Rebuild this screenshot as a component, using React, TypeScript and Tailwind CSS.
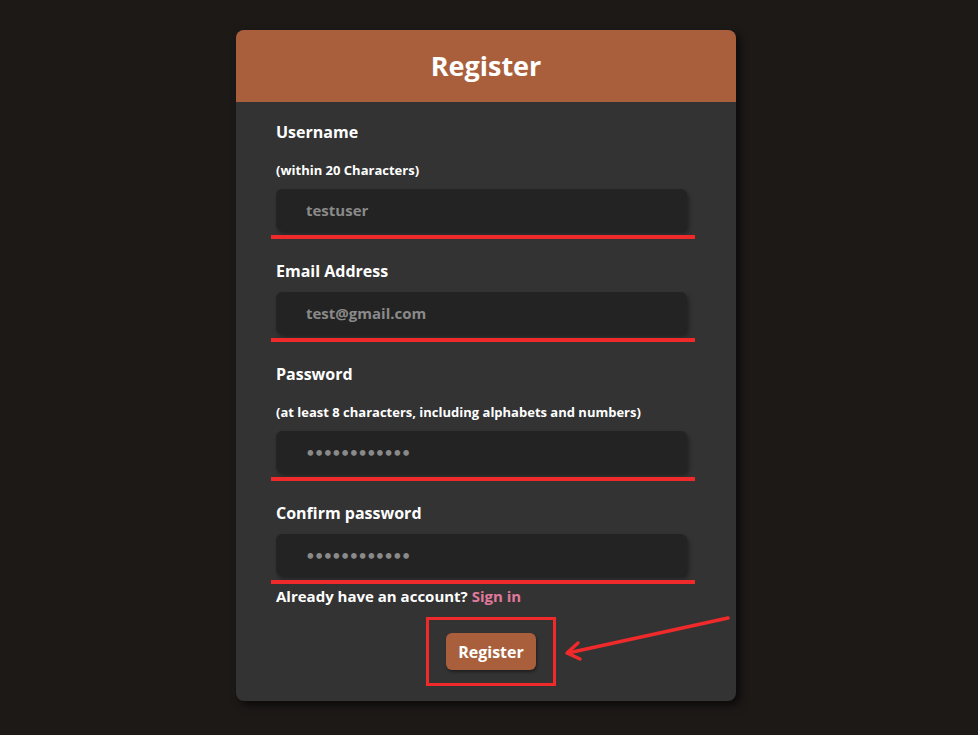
import React from 'react';

const font = { fontFamily: '"Open Sans", Lato, sans-serif' };

function Field({ label, hint, value, password }: { label: string; hint?: string; value: string; password?: boolean }) {
    return (
        <div className="flex flex-col">
            <label className="text-[16px] leading-[24px] font-bold text-white">{label}</label>
            {hint && <p className="mt-[16px] text-[13px] leading-[20px] font-bold text-white">{hint}</p>}
            <div className="mt-[9px] h-[42px] w-[411px] rounded-md bg-[#232323] shadow-[2px_3px_4px_rgba(0,0,0,0.35)] flex items-center pl-[30px]">
                {password ? (
                    <span className="text-[#8a8a8a] text-[15px] font-['Lato']">{value}</span>
                ) : (
                    <span className="text-[#8a8a8a] text-[15px] font-bold">{value}</span>
                )}
            </div>
            {/* red annotation underline */}
            <div className="mt-[4px] -ml-[5px] h-[4px] w-[424px] bg-[#f02a2a]"></div>
        </div>
    );
}

export default function App() {
    return (
        <div className="min-h-[735px] w-full bg-[#1c1917] relative" style={font}>
            <div className="pt-[30px] pl-[236px]">
                <div className="w-[500px] rounded-lg overflow-hidden bg-[#333333] shadow-[4px_4px_8px_rgba(0,0,0,0.6)]">
                    <div className="h-[72px] bg-[#a95f3b] flex items-center justify-center">
                        <h1 className="text-[27px] font-bold text-white">Register</h1>
                    </div>
                    <div className="px-[40px] pt-[18px] pb-[15px] flex flex-col gap-[20px]">
                        <Field label="Username" hint="(within 20 Characters)" value="testuser" />
                        <Field label="Email Address" value="test@gmail.com" />
                        <Field
                            label="Password"
                            hint="(at least 8 characters, including alphabets and numbers)"
                            value="••••••••••••"
                            password
                        />
                        <div className="flex flex-col">
                            <Field label="Confirm password" value="••••••••••••" password />
                            <p className="mt-[2px] text-[15px] leading-[20px] font-bold text-white">
                                Already have an account? <span className="text-[#e0799b]">Sign in</span>
                            </p>
                            <div className="mt-[11px] pl-[10px] flex justify-center">
                                <div className="border-[3px] border-[#f02a2a] w-[130px] h-[69px] flex items-center justify-center">
                                    <button className="bg-[#a95f3b] text-white font-bold text-[16px] w-[90px] h-[37px] rounded-md shadow-[1px_2px_3px_rgba(0,0,0,0.4)]">
                                        Register
                                    </button>
                                </div>
                            </div>
                        </div>
                    </div>
                </div>
            </div>
            {/* red annotation arrow */}
            <svg className="absolute left-0 top-0" width="978" height="735" viewBox="0 0 978 735" fill="none">
                <path d="M728 618 L568 653" stroke="#f02a2a" strokeWidth="3.5" strokeLinecap="round" />
                <path d="M578 643 L567 653 L580 659" stroke="#f02a2a" strokeWidth="3.5" strokeLinecap="round" strokeLinejoin="round" />
            </svg>
        </div>
    );
}
